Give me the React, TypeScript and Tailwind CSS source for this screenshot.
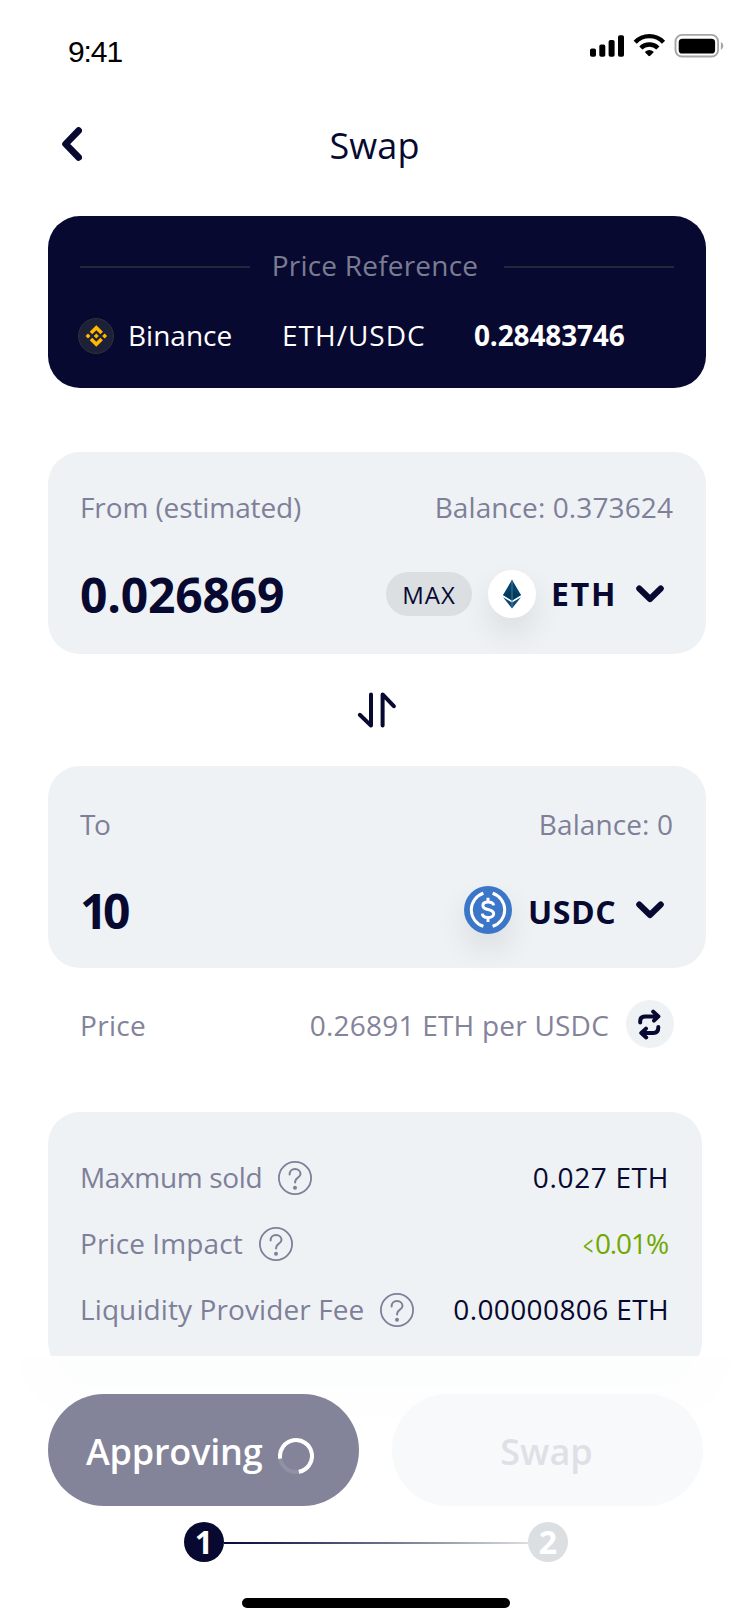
import type { ReactNode } from 'react';

function StatusBar() {
  return (
    <div className="flex h-[92px] justify-between pl-[68px] pr-[25px]">
      <span className="mt-[31px] font-['Liberation_Sans',sans-serif] text-[30px] leading-[42px] tracking-[-1.1px] text-black">9:41</span>
      <svg className="mt-[30px]" width="136" height="32" viewBox="589 30 136 32" fill="none">
        <g fill="#000">
          <rect x="590" y="48.5" width="6" height="8.3" rx="1.8" />
          <rect x="599.3" y="44.6" width="6" height="12.2" rx="1.8" />
          <rect x="608.6" y="40" width="6" height="16.8" rx="1.8" />
          <rect x="618" y="35.2" width="6" height="21.6" rx="1.8" />
          <path d="M644.8 52 Q649.3 48.2 653.9 52 L650.2 55.7 Q649.3 56.6 648.4 55.7 Z" />
          <rect x="678.7" y="38.7" width="36.4" height="14.8" rx="3.6" />
        </g>
        <g stroke="#000" strokeWidth="4.4">
          <path d="M635.2 42.2 A 19.6 19.6 0 0 1 663.5 42.2" />
          <path d="M640.8 48 A 12.2 12.2 0 0 1 657.9 48" />
        </g>
        <rect x="675.5" y="34.9" width="42.6" height="21.6" rx="6.5" stroke="#a6a6a6" strokeWidth="1.9" />
        <path d="M720.9 42 Q723.3 43.2 723.3 46 Q723.3 48.8 720.9 50 Z" fill="#a6a6a6" />
      </svg>
    </div>
  );
}

function Chevron() {
  return (
    <svg width="28" height="18" viewBox="0 0 28 18" fill="none" stroke="#070930" strokeWidth="6" strokeLinecap="round" strokeLinejoin="round">
      <path d="M3.2 3.5 L14 14 L24.8 3.5" />
    </svg>
  );
}

function BinanceLogo() {
  return (
    <svg width="36" height="36" viewBox="0 0 36 36">
      <circle cx="18" cy="18" r="17.5" fill="#1e2037" stroke="#303140" />
      <g transform="translate(18.3 18) scale(0.675)" fill="#ffb900">
        <path d="M-9.8 -6.2 L0 -16 L9.8 -6.2 L6 -2.5 L0 -8.5 L-6 -2.5 Z" />
        <path d="M-9.8 6.2 L0 16 L9.8 6.2 L6 2.5 L0 8.5 L-6 2.5 Z" />
        <path d="M-16 0 L-12.3 -3.7 L-8.6 0 L-12.3 3.7 Z" />
        <path d="M16 0 L12.3 -3.7 L8.6 0 L12.3 3.7 Z" />
        <path d="M-3.8 0 L0 -3.8 L3.8 0 L0 3.8 Z" />
      </g>
    </svg>
  );
}

function EthLogo() {
  return (
    <svg width="48" height="48" viewBox="0 0 48 48">
      <path d="M24 9.8 L33 25 L24 30.4 L15 25 Z" fill="#03426a" />
      <path d="M24 20.8 L33 25 L24 30.4 L15 25 Z" fill="#003a5d" />
      <path d="M15 27.2 L24 32.4 L33 27.2 L24 38.4 Z" fill="#0c4b73" />
      <path d="M24 10 V38" stroke="#4b7b9a" strokeWidth="1" />
    </svg>
  );
}

function UsdcLogo() {
  return (
    <svg width="48" height="48" viewBox="0 0 48 48" fill="none">
      <circle cx="24" cy="24" r="24" fill="#3b76c8" />
      <g stroke="#fff" strokeWidth="3" strokeLinecap="butt">
        <path d="M19.4 7.3 A 17.3 17.3 0 0 0 19.4 40.3" />
        <path d="M28.6 7.3 A 17.3 17.3 0 0 1 28.6 40.3" />
        <path d="M29.6 19.4 C29.4 17 27 16 24 16 C21 16 18.9 17.4 18.9 19.5 C18.9 22.2 21 22.9 24 23.5 C27 24.1 29.7 25 29.7 27.8 C29.7 30.2 27.2 31.6 24 31.6 C20.7 31.6 18.5 30.2 18.3 27.7 M24 11.8 V16 M24 31.6 V36" />
      </g>
    </svg>
  );
}

function HelpIcon() {
  return (
    <svg className="shrink-0" width="34" height="34" viewBox="0 0 34 34" fill="none" stroke="#7f7f99" strokeLinecap="round">
      <circle cx="17" cy="17" r="16.1" strokeWidth="1.8" />
      <path d="M11.6 13.4 C11.6 10 13.9 8 17 8 C20.2 8 22.5 10.1 22.5 13 C22.5 16.8 17.1 16.6 17.1 20.8 V21.4" strokeWidth="2" />
      <circle cx="17" cy="26.8" r="2" fill="#7f7f99" stroke="none" />
    </svg>
  );
}

function TokenCard({ label, balance, amount, children }: { label: ReactNode; balance: ReactNode; amount: ReactNode; children: ReactNode }) {
  return (
    <div className="flex h-[202px] flex-col rounded-[32px] bg-[#eef2f5] pl-8 pr-[33px]">
      <div className="flex h-[74px] items-end justify-between leading-[38px] text-[#7f7f99]">
        {label}
        {balance}
      </div>
      <div className="mt-11 flex h-12 items-center justify-between">
        {amount}
        <div className="flex items-center pr-[9px]">{children}</div>
      </div>
    </div>
  );
}

function DetailRow({ label, value }: { label: ReactNode; value: ReactNode }) {
  return (
    <div className="flex h-[66px] items-center justify-between">
      <div className="flex items-center gap-4 text-[#7f7f99]">
        {label}
        <HelpIcon />
      </div>
      {value}
    </div>
  );
}

export default function App() {
  return (
    <main className="flex h-[1624px] w-[750px] flex-col overflow-hidden whitespace-nowrap bg-white font-['Open_Sans','Noto_Sans',sans-serif] text-[28px] text-[#070930]">
      <StatusBar />

      <header className="grid h-[104px] grid-cols-[1fr_auto_1fr] items-center px-[62px]">
        <svg width="20" height="34" viewBox="0 0 20 34" fill="none" stroke="#070930" strokeWidth="6.8" strokeLinecap="round" strokeLinejoin="round">
          <path d="M16.6 3.6 L3.6 17 L16.6 30.4" />
        </svg>
        <h1 className="-ml-px pt-[3px] text-[36px] leading-[50px] tracking-[0.1px]">Swap</h1>
      </header>

      <section className="mx-[44px] mt-5 ml-12 h-[172px] rounded-[32px] bg-[#070930] px-8 pt-[29px] text-white">
        <div className="flex h-[40px] items-center justify-between">
          <div className="mt-1 h-0.5 w-[170px] bg-[#26273a]" />
          <span className="-ml-1 tracking-[0.2px] text-[#7b7c90]">Price Reference</span>
          <div className="mt-1 h-0.5 w-[170px] bg-[#26273a]" />
        </div>
        <div className="-ml-0.5 mt-8 flex h-[38px] items-center leading-[38px]">
          <BinanceLogo />
          <span className="ml-[14px] w-[154px] pb-0.5">Binance</span>
          <span className="w-[192px] pb-0.5 tracking-[1px]">ETH/USDC</span>
          <span className="pb-0.5 font-bold tracking-[-0.15px]">0.28483746</span>
        </div>
      </section>

      <section className="mt-16 ml-12 mr-[44px]">
        <TokenCard
          label={<span className="tracking-[-0.1px]">From (estimated)</span>}
          balance={<span className="tracking-[0.1px]">Balance: 0.373624</span>}
          amount={<span className="pt-px text-[48px] font-bold leading-[48px] tracking-[-0.2px]">0.026869</span>}
        >
          <button className="h-[44px] w-[86px] rounded-full bg-[#dbdfe2] pt-px text-[24px] leading-[43px] tracking-[0.9px]">MAX</button>
          <div className="ml-4 rounded-full bg-white shadow-[0_15px_32px_rgba(0,0,0,0.09)]">
            <EthLogo />
          </div>
          <span className="ml-[15px] w-[85px] text-[32px] font-bold leading-[44px] tracking-[1.8px]">ETH</span>
          <Chevron />
        </TokenCard>

        <div className="flex h-28 items-center justify-center pl-px pr-[3px] pt-0.5">
          <svg width="40" height="40" viewBox="0 0 40 40" fill="none" stroke="#070930" strokeWidth="4" strokeLinecap="round" strokeLinejoin="round">
            <path d="M15 3.4 V34.6 L3.8 23.8" />
            <path d="M26.6 34.6 V3.4 L37.8 15.2" />
          </svg>
        </div>

        <TokenCard
          label={<span className="-mb-[3px] tracking-[-1.5px]">To</span>}
          balance={<span className="-mb-[3px] tracking-[0.1px]">Balance: 0</span>}
          amount={<span className="pt-1.5 text-[48px] font-bold leading-[48px] tracking-[-4.4px]">10</span>}
        >
          <div className="mt-1 rounded-full shadow-[0_15px_32px_rgba(0,0,0,0.09)]">
            <UsdcLogo />
          </div>
          <span className="ml-4 w-[108px] pt-2 text-[32px] font-bold leading-[44px] tracking-[0.6px]">USDC</span>
          <div className="pt-1">
            <Chevron />
          </div>
        </TokenCard>
      </section>

      <section className="mt-8 flex h-12 items-center pl-20 pr-[76px] text-[#83839a]">
        <span className="flex-1 pt-px tracking-[0.3px]">Price</span>
        <span className="mr-[17px] pt-px tracking-[0.22px]">0.26891 ETH per USDC</span>
        <button className="flex size-12 items-center justify-center rounded-full bg-[#eef2f5]">
          <svg width="24" height="32" viewBox="0 0 24 32" fill="none" stroke="#070930" strokeWidth="4" strokeLinecap="round" strokeLinejoin="round">
            <path d="M2.2 14.5 V13 Q2.2 8.4 7.2 8.4 H19.9 M15.2 3.6 L20.4 8.4 L16 12.6" />
            <path d="M20.3 18.9 V19.6 Q20.3 25 15.3 25 H3.3 M8 20.6 L3.3 25 L8.2 29.4" />
          </svg>
        </button>
      </section>

      <section className="ml-12 mr-12 mt-16 h-[244px] shrink-0 overflow-hidden">
        <div className="h-[262px] rounded-[32px] bg-[#eef2f5] pl-8 pr-[34px] pt-[33px]">
          <DetailRow label={<span className="pb-0.5 tracking-[-0.35px]">Maxmum sold</span>} value={<span className="-mr-px pb-0.5 tracking-[0.65px]">0.027 ETH</span>} />
          <DetailRow
            label={<span className="pb-0.5 tracking-[0.1px]">Price Impact</span>}
            value={
              <span className="flex items-center pb-0.5 text-[#6fa800]">
                <span className="mt-[4px] w-[12px] origin-left scale-x-[0.64]">&lt;</span>
                <span className="tracking-[-1.1px]">0.01%</span>
              </span>
            }
          />
          <DetailRow label={<span className="pb-0.5 tracking-[0.1px]">Liquidity Provider Fee</span>} value={<span className="-mr-px pb-0.5 tracking-[0.38px]">0.00000806 ETH</span>} />
        </div>
      </section>

      <footer className="relative isolate flex flex-1 flex-col">
        <div className="absolute left-5 top-0 -z-10 h-[61px] w-[710px] rounded-b-[60px] bg-[#fefefe]" />
        <div className="absolute left-[58px] top-0 -z-10 h-[30px] w-[634px] rounded-b-[36px] bg-[#fcfdfd]" />
        <div className="mt-[38px] flex h-28 gap-[33px] pl-12">
          <button className="flex w-[311px] items-center rounded-full bg-[#838399] pl-[38px] text-[36px] font-semibold text-white">
            <span className="pt-[3px] tracking-[-0.2px]">Approving</span>
            <svg className="ml-auto mr-[45px] mt-3" width="36" height="36" viewBox="0 0 36 36" fill="none" strokeWidth="4">
              <circle cx="18" cy="18" r="16" stroke="#9191a5" />
              <path d="M2.2 20.6 A 16 16 0 1 1 20.8 33.8" stroke="#fff" />
            </svg>
          </button>
          <button className="w-[311px] rounded-full bg-[#f8f9fb] pr-0.5 pt-[3px] text-[36px] font-semibold text-[#dfe0e6]">Swap</button>
        </div>
        <div className="mt-4 flex h-10 items-center pl-[184px] text-[32px] font-bold text-white">
          <span className="flex size-10 items-center justify-center rounded-full bg-[#070930] leading-[38px]">1</span>
          <span className="mt-0.5 h-0.5 w-[304px] bg-gradient-to-r from-[#070930] to-[#dbdfe2]" />
          <span className="flex size-10 items-center justify-center rounded-full bg-[#dbdfe2] leading-[38px]">2</span>
        </div>
        <div className="ml-[242px] mt-9 h-[10px] w-[268px] rounded-full bg-black" />
      </footer>
    </main>
  );
}
